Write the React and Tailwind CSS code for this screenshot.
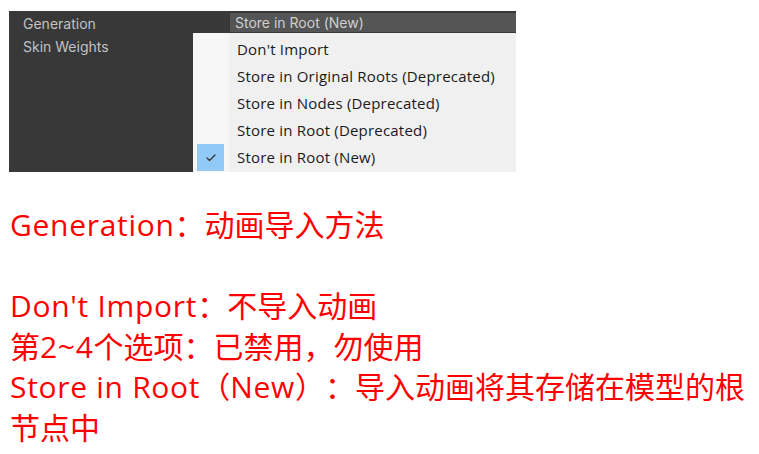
import { Check } from 'lucide-react'

const menuItems = [
	'Don\'t Import',
	'Store in Original Roots (Deprecated)',
	'Store in Nodes (Deprecated)',
	'Store in Root (Deprecated)',
	'Store in Root (New)',
]

// each line: [latin, cjk] pairs, latin gets a touch of tracking
const notes = [
	[['Generation', '：动画导入方法']],
	[],
	[['Don\'t Import', '：不导入动画']],
	[['', '第'], ['2~4', '个选项：已禁用，勿使用']],
	[['Store in Root', '（'], ['New', '）：导入动画将其存储在模型的根']],
	[['', '节点中']],
]

const App = () => {
	return (
		<div className="h-[454px] w-[759px] overflow-hidden bg-white">
			<div className="pl-[9px] pt-[11px]">
				<div className="relative h-[161px] w-[507px] bg-[#383838] font-['Inter',sans-serif] text-[14px]">
					<div className="flex h-[22px] items-start">
						<span className="w-[221px] pl-[14px] pt-[3px] leading-[20px] text-[#c2c2c2]">Generation</span>
						<div className="mt-[2px] flex h-[19px] flex-1 items-center bg-[#555555] pl-[5px] text-[#cfcfcf]">
							Store in Root (New)
						</div>
					</div>
					<div className="flex h-[26px] items-center pl-[14px] pt-[1px] text-[#c2c2c2]">Skin Weights</div>

					<div className="absolute bottom-0 left-[184px] right-0 top-[22px] flex bg-[#f0f0f0] pt-[3px] font-['Open_Sans',sans-serif] text-[15px] tracking-[0.2px] text-[#1a1a1a]">
						<div className="absolute bottom-0 left-0 top-0 w-[36px] bg-[#f6f6f6]" />
						<div className="relative flex flex-1 flex-col">
							{menuItems.map((item, i) => (
								<div key={item} className="flex h-[27px] items-center">
									<div className="flex h-[27px] w-[44px] items-center pl-[4px]">
										{i === menuItems.length - 1 && (
											<div className="flex h-[27px] w-[27px] items-center justify-center bg-[#91c9f7]">
												<Check className="h-[12px] w-[12px] text-[#333333]" strokeWidth={2.5} />
											</div>
										)}
									</div>
									<span className="leading-[27px]">{item}</span>
								</div>
							))}
						</div>
					</div>
				</div>
			</div>

			<div className="mt-[33px] pl-[10px] font-['Open_Sans','Noto_Sans_CJK_SC',sans-serif] text-[30px] leading-[40.5px] text-[#ff0000] [text-spacing-trim:space-all]">
				{notes.map((line, i) => (
					<p key={i} className="h-[40.5px] whitespace-nowrap">
						{line.map(([latin, cjk], j) => (
							<span key={j}>
								<span className="tracking-[0.7px]">{latin}</span>
								{cjk}
							</span>
						))}
					</p>
				))}
			</div>
		</div>
	)
}

export default App
